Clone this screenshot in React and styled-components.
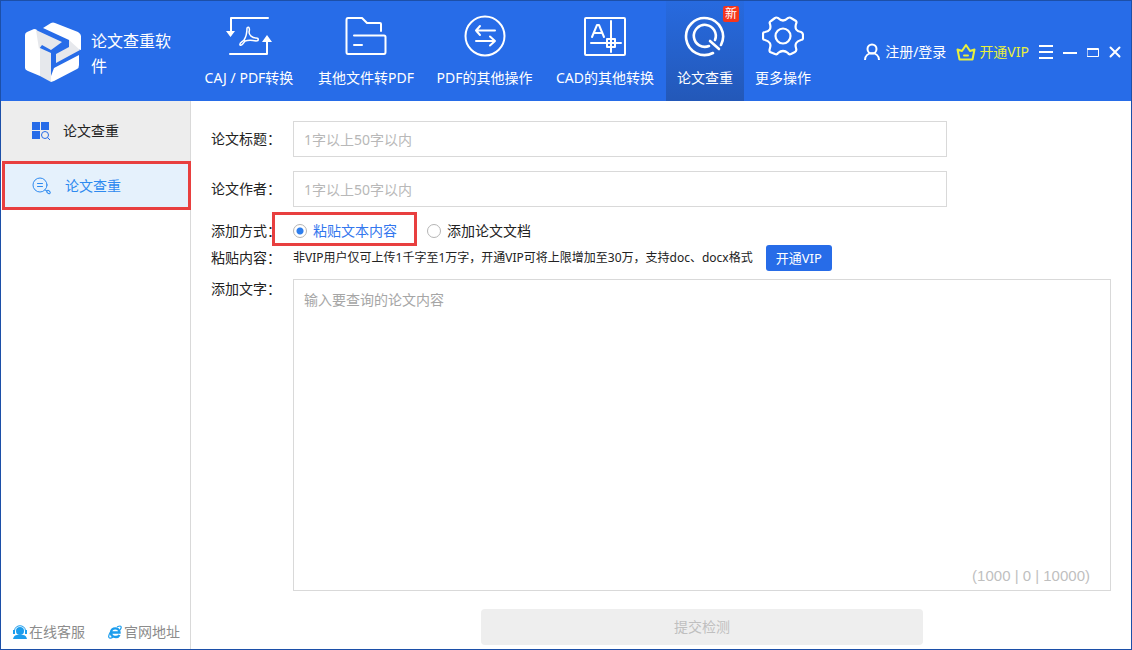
import { useState } from 'react'
import styled, { createGlobalStyle } from 'styled-components'

const colors = {
  blue: '#276ce8',
  frame: '#1c4fa8',
  link: '#3377ee',
  red: '#e83f3f',
  line: '#d9d9d9',
  muted: '#b8b8b8',
}

const iconProps = {
  fill: 'none',
  stroke: 'currentColor',
  strokeWidth: 2,
  strokeLinecap: 'round',
  strokeLinejoin: 'round',
  'aria-hidden': true,
}

const LogoIcon = () => (
  <svg width="56" height="60" viewBox="0 0 56 60" aria-hidden="true">
    <path fill="#fff" d="M0 13Q0 11 2 10L9 7Q11 7 12 8L15 26V54L3 49Q0 48 0 46Z" />
    <path fill="#e6e8ec" d="M11 8 37 20 26 28 17 23 14 27Z" />
    <path fill="#fff" d="M18 6 26 1Q28 0 30 1L53 10Q56 12 56 14V28L44 25V18Z" />
    <path fill="#e6e8ec" d="M44 18 55 28 31 41V32L44 25Z" />
    <path fill="#e6e8ec" d="M15 26 26 31V60L15 54Z" />
    <path fill="#fff" d="M29 46 54 33V43Q54 46 52 47L29 59 26 60V54Z" />
  </svg>
)

const ConvertIcon = () => (
  <svg width="48" height="42" viewBox="0 0 48 42" {...iconProps}>
    <path d="M43 3H6V17" />
    <path d="M5 39H42V24" />
    <path fill="currentColor" stroke="none" d="M1 16H10L5.500 22Z M37 27H47L42 20Z" />
    <path strokeWidth="1.500" d="M22 13C24 11 25 14 24 17C24 20 27 23 31 23C34 23 34 26 31 26C27 25 23 25 20 26C18 29 17 31 15 30C14 28 17 27 19 25C21 22 22 18 22 13Z" />
  </svg>
)

const FolderIcon = () => (
  <svg width="42" height="42" viewBox="0 0 42 42" {...iconProps}>
    <path d="M36 16V9Q36 8 35 8H22L17 3H3Q1.500 3 1.500 5V37Q1.500 39 3 39H39Q40.500 39 40.500 37V22Q40.500 20.500 39 20.500H9M9 30H17" />
  </svg>
)

const SwapIcon = () => (
  <svg width="42" height="42" viewBox="0 0 42 42" {...iconProps}>
    <circle cx="21" cy="21" r="19.500" />
    <path d="M31 15.500H12M16 11 12 15.500 16 20M12 26H31M26 21.500 31 26 26 30.500" />
  </svg>
)

const CadIcon = () => (
  <svg width="42" height="42" viewBox="0 0 42 42" {...iconProps}>
    <rect x="1" y="3" width="40" height="37" rx="1" />
    <path d="M7 28H23M31 28H37M27 6V24M27 32V37M23 24H31V32H23ZM27 24V32M23 28H31" />
    <path d="M8 22 13 10H15L20 22M10 18H18" />
  </svg>
)

const CheckIcon = () => (
  <svg width="42" height="42" viewBox="0 0 42 42" {...iconProps} strokeWidth="2.600">
    <path d="M29 38A18.500 18.500 0 1 1 37 30" />
    <path d="M25 31A11 11 0 1 1 31 25M26 26 35 34" />
  </svg>
)

const GearIcon = () => (
  <svg width="42" height="42" viewBox="0 0 42 42" {...iconProps} strokeWidth="2.200">
    <path d="M13 3Q14 2 16 3Q21 8 26 3Q28 2 29 3L34 6Q35 7 34 9Q32 16 39 17Q41 18 41 20V23Q41 25 39 25Q32 27 34 33Q35 36 33 37L29 39Q27 40 26 38Q21 34 16 38Q15 40 13 39L8 37Q7 36 8 33Q10 27 3 25Q1 25 1 23V19Q1 17 3 17Q10 16 8 9Q7 7 9 6Z" />
    <circle cx="21" cy="21" r="7.500" />
  </svg>
)

const UserIcon = () => (
  <svg width="18" height="18" viewBox="0 0 18 18" {...iconProps} strokeLinecap="butt">
    <circle cx="9" cy="6" r="4.500" />
    <path d="M2 17C2 8 16 8 16 17" />
  </svg>
)

const CrownIcon = () => (
  <svg width="20" height="18" viewBox="0 0 20 18" {...iconProps}>
    <path d="M3.500 16.500 1.500 6.500 6 8 10 2 14 8 18.500 6.500 16.500 16.500ZM8 12.500H12" />
  </svg>
)

const MenuIcon = () => (
  <svg width="14" height="16" viewBox="0 0 14 16" {...iconProps} strokeLinecap="butt">
    <path d="M0 2H14M0 8H14M0 14H14" />
  </svg>
)

const MinimizeIcon = () => (
  <svg width="14" height="16" viewBox="0 0 14 16" {...iconProps} strokeLinecap="butt">
    <path d="M0 9H14" />
  </svg>
)

const MaximizeIcon = () => (
  <svg width="12" height="16" viewBox="0 0 12 16" {...iconProps} strokeWidth="1">
    <path d="M.500 4.500H11.500V12.500H.500ZM.500 5.500H11.500" />
  </svg>
)

const CloseIcon = () => (
  <svg width="12" height="16" viewBox="0 0 12 16" {...iconProps}>
    <path d="M1.500 3.500 10.500 12.500M10.500 3.500 1.500 12.500" />
  </svg>
)

const BlocksIcon = () => (
  <svg width="18" height="18" viewBox="0 0 18 18" aria-hidden="true">
    <path fill="currentColor" d="M0 0H8V8H0ZM9 0H17V8H9ZM0 9H8V17H0Z" />
    <circle cx="13" cy="13" r="3.500" fill="none" stroke="currentColor" />
    <path stroke="currentColor" d="M15.500 15.500 18 18" />
  </svg>
)

const SearchIcon = () => (
  <svg width="20" height="18" viewBox="0 0 20 18" {...iconProps} strokeWidth="1">
    <circle cx="8" cy="8" r="7" />
    <path d="M5.500 6.500H10.500M5.500 9.500H10.500M13 13 15 14" />
    <ellipse cx="16.500" cy="15" rx="2" ry="1.300" transform="rotate(45 16.500 15)" />
  </svg>
)

const ServiceIcon = () => (
  <svg width="14" height="14" viewBox="0 0 14 14" aria-hidden="true">
    <circle cx="7" cy="6" r="4" fill="#1c9ded" />
    <path fill="#1c9ded" d="M0 14Q1 10 4 10H10Q13 10 14 14ZM0 5H2V9H0ZM12 5H14V9H12Z" />
    <path fill="none" stroke="#1c9ded" d="M1.500 6C1.500 -1 12.500 -1 12.500 6" />
  </svg>
)

const BrowserIcon = () => (
  <svg width="14" height="14" viewBox="0 0 14 14" fill="none" stroke="#1c9ded" aria-hidden="true">
    <path strokeWidth="2.400" d="M4 7.500H11.500C11.500 2 3 2 3 7.500C3 13 10 13 11.500 10" />
    <path strokeWidth="1.200" d="M9 2Q13 0 13.200 2Q13.300 3 12 5M2.500 7C-1 12 1 15 5 12" />
  </svg>
)

const tools = [
  { label: 'CAJ / PDF转换', Icon: ConvertIcon, width: 116 },
  { label: '其他文件转PDF', Icon: FolderIcon, width: 118 },
  { label: 'PDF的其他操作', Icon: SwapIcon, width: 119 },
  { label: 'CAD的其他转换', Icon: CadIcon, width: 122 },
  { label: '论文查重', Icon: CheckIcon, width: 78, active: true, badge: '新' },
  { label: '更多操作', Icon: GearIcon, width: 78 },
]

const App = () => {
  const [mode, setMode] = useState('paste')
  return (
    <>
      <GlobalStyle />
      <Window>
        <Header>
          <Brand>
            <LogoIcon />
            <BrandName>论文查重软件</BrandName>
          </Brand>
          <Nav>
            {tools.map(({ label, Icon, width, active, badge }) => (
              <NavButton key={label} $width={width} $active={active}>
                <Icon />
                {label}
                {badge && <Badge>{badge}</Badge>}
              </NavButton>
            ))}
          </Nav>
          <Account>
            <AccountButton><UserIcon />注册/登录</AccountButton>
            <AccountButton $vip><CrownIcon />开通VIP</AccountButton>
            <WindowButtons>
              <IconButton aria-label="菜单"><MenuIcon /></IconButton>
              <IconButton aria-label="最小化"><MinimizeIcon /></IconButton>
              <IconButton aria-label="最大化"><MaximizeIcon /></IconButton>
              <IconButton aria-label="关闭"><CloseIcon /></IconButton>
            </WindowButtons>
          </Account>
        </Header>
        <Body>
          <Sidebar>
            <SideTitle><BlocksIcon />论文查重</SideTitle>
            <SideItem href="#check"><SearchIcon />论文查重</SideItem>
            <SideFooter>
              <FooterLink href="#service"><ServiceIcon />在线客服</FooterLink>
              <FooterLink href="#site"><BrowserIcon />官网地址</FooterLink>
            </SideFooter>
          </Sidebar>
          <Form onSubmit={(e) => e.preventDefault()}>
            <Row>
              <Label htmlFor="title">论文标题：</Label>
              <TextInput id="title" placeholder="1字以上50字以内" />
            </Row>
            <Row>
              <Label htmlFor="author">论文作者：</Label>
              <TextInput id="author" placeholder="1字以上50字以内" />
            </Row>
            <Options>
              <Row $compact>
                <Label as="span">添加方式：</Label>
                <RadioLabel $checked={mode === 'paste'} $marked>
                  <Radio type="radio" name="mode" checked={mode === 'paste'} onChange={() => setMode('paste')} />
                  粘贴文本内容
                </RadioLabel>
                <RadioLabel $checked={mode === 'file'}>
                  <Radio type="radio" name="mode" checked={mode === 'file'} onChange={() => setMode('file')} />
                  添加论文文档
                </RadioLabel>
              </Row>
              <Row $compact>
                <Label as="span">粘贴内容：</Label>
                <Hint>非VIP用户仅可上传1千字至1万字，开通VIP可将上限增加至30万，支持doc、docx格式</Hint>
                <VipButton type="button">开通VIP</VipButton>
              </Row>
            </Options>
            <ContentRow>
              <Label htmlFor="content">添加文字：</Label>
              <Editor>
                <TextArea id="content" placeholder="输入要查询的论文内容" />
                <Counter>(1000 | 0 | 10000)</Counter>
              </Editor>
            </ContentRow>
            <Actions>
              <Submit disabled>提交检测</Submit>
            </Actions>
          </Form>
        </Body>
      </Window>
    </>
  )
}

export default App

const GlobalStyle = createGlobalStyle`
  * {
    box-sizing: border-box;
  }
  body {
    margin: 0;
    color: #222;
  }
  body, button, input, textarea {
    font-family: "Noto Sans", "Noto Sans CJK SC", sans-serif;
    font-size: 14px;
    line-height: 20px;
  }
  button {
    border: 0;
    padding: 0;
    background: none;
    color: inherit;
    cursor: pointer;
  }
  a {
    text-decoration: none;
  }
  svg {
    flex-shrink: 0;
  }
`

const Window = styled.div`
  min-height: 100vh;
  display: flex;
  flex-direction: column;
  border: 1px solid ${colors.frame};
  background: #fff;
`

const Header = styled.header`
  display: flex;
  height: 100px;
  background: ${colors.blue};
  color: #fff;
`

const Brand = styled.div`
  width: 190px;
  flex-shrink: 0;
  display: flex;
  align-items: center;
  gap: 10px;
  padding: 2px 16px 0 24px;
`

const BrandName = styled.div`
  padding-top: 4px;
  font-size: 16px;
  line-height: 25px;
`

const Nav = styled.nav`
  display: flex;
`

const NavButton = styled.button`
  position: relative;
  display: flex;
  flex-direction: column;
  align-items: center;
  gap: 11px;
  min-width: ${({ $width }) => $width}px;
  padding-top: 14px;
  white-space: nowrap;
  background: ${({ $active }) => ($active ? 'linear-gradient(#276adf, #2358b8)' : 'none')};
`

const Badge = styled.span`
  position: absolute;
  top: 5px;
  right: 5px;
  padding: 0 2px;
  border-radius: 2px;
  background: #f5361d;
  font-size: 12px;
  line-height: 16px;
`

const Account = styled.div`
  display: flex;
  align-items: center;
  margin-left: auto;
  padding: 2px 10px 0 0;
  gap: 10px;
`

const AccountButton = styled.button`
  display: flex;
  align-items: center;
  gap: ${({ $vip }) => ($vip ? 3 : 4)}px;
  white-space: nowrap;
  color: ${({ $vip }) => ($vip ? '#e9f03c' : '#fff')};
`

const WindowButtons = styled.div`
  display: flex;
  gap: 10px;
`

const IconButton = styled.button`
  display: flex;
`

const Body = styled.div`
  flex: 1;
  display: flex;
`

const Sidebar = styled.aside`
  width: 190px;
  flex-shrink: 0;
  display: flex;
  flex-direction: column;
  border-right: 1px solid ${colors.line};
`

const SideTitle = styled.div`
  display: flex;
  align-items: center;
  gap: 13px;
  height: 60px;
  padding-left: 31px;
  background: #ededed;

  svg {
    color: ${colors.blue};
  }
`

const SideItem = styled.a`
  display: flex;
  align-items: center;
  gap: 13px;
  height: 49px;
  margin: 0 -1px 0 1px;
  padding-left: 27px;
  border: 3px solid ${colors.red};
  background: #e5f1fc;
  color: #2e8af0;
`

const SideFooter = styled.div`
  display: flex;
  gap: 23px;
  margin-top: auto;
  padding: 0 0 7px 12px;
`

const FooterLink = styled.a`
  display: flex;
  align-items: center;
  gap: 2px;
  color: #8c8c8c;
`

const Form = styled.form`
  flex: 1;
  display: flex;
  flex-direction: column;
  gap: 14px;
  padding: 20px 20px 4px;
`

const Row = styled.div`
  display: flex;
  align-items: center;
  min-height: ${({ $compact }) => ($compact ? 26 : 36)}px;
`

const Label = styled.label`
  width: 82px;
  flex-shrink: 0;
`

const TextInput = styled.input`
  width: 80%;
  max-width: calc((100% - 82px) * 0.8);
  height: 36px;
  padding: 0 10px;
  border: 1px solid ${colors.line};
  outline: none;

  &::placeholder {
    color: ${colors.muted};
  }
`

const Options = styled.div`
  display: flex;
  flex-direction: column;
  gap: 1px;
  margin: -3px 0 -6px;
`

const RadioLabel = styled.label`
  position: relative;
  display: flex;
  align-items: center;
  gap: 6px;
  margin-right: 30px;
  color: ${({ $checked }) => ($checked ? colors.link : 'inherit')};

  &::after {
    content: ${({ $marked }) => ($marked ? '""' : 'none')};
    position: absolute;
    inset: -9px -20px -5px -21px;
    border: 3px solid ${colors.red};
  }
`

const Radio = styled.input`
  appearance: none;
  width: 14px;
  height: 14px;
  margin: 0;
  border: 1px solid #b5b5b5;
  border-radius: 50%;

  &:checked {
    background: radial-gradient(circle, #2e7eed 3px, #fff 4px);
  }
`

const Hint = styled.span`
  font-size: 12px;
`

const VipButton = styled.button`
  height: 26px;
  margin-left: 13px;
  padding: 0 10px;
  border-radius: 3px;
  background: ${colors.blue};
  color: #fff;
  font-size: 13px;
  white-space: nowrap;
`

const ContentRow = styled.div`
  flex: 1;
  display: flex;
`

const Editor = styled.div`
  position: relative;
  flex: 1;
  display: flex;
`

const TextArea = styled.textarea`
  flex: 1;
  min-height: 200px;
  padding: 10px;
  border: 1px solid ${colors.line};
  outline: none;
  resize: none;

  &::placeholder {
    color: #a6a6a6;
  }
`

const Counter = styled.span`
  position: absolute;
  right: 21px;
  bottom: 5px;
  color: #bfbfbf;
  font-family: "Liberation Sans", sans-serif;
  font-size: 15px;
`

const Actions = styled.div`
  display: flex;
  justify-content: center;
  margin-top: 4px;
  padding-left: 82px;
`

const Submit = styled.button`
  width: 54%;
  height: 36px;
  border-radius: 4px;
  background: #eee;
  color: #bfbfbf;
`
